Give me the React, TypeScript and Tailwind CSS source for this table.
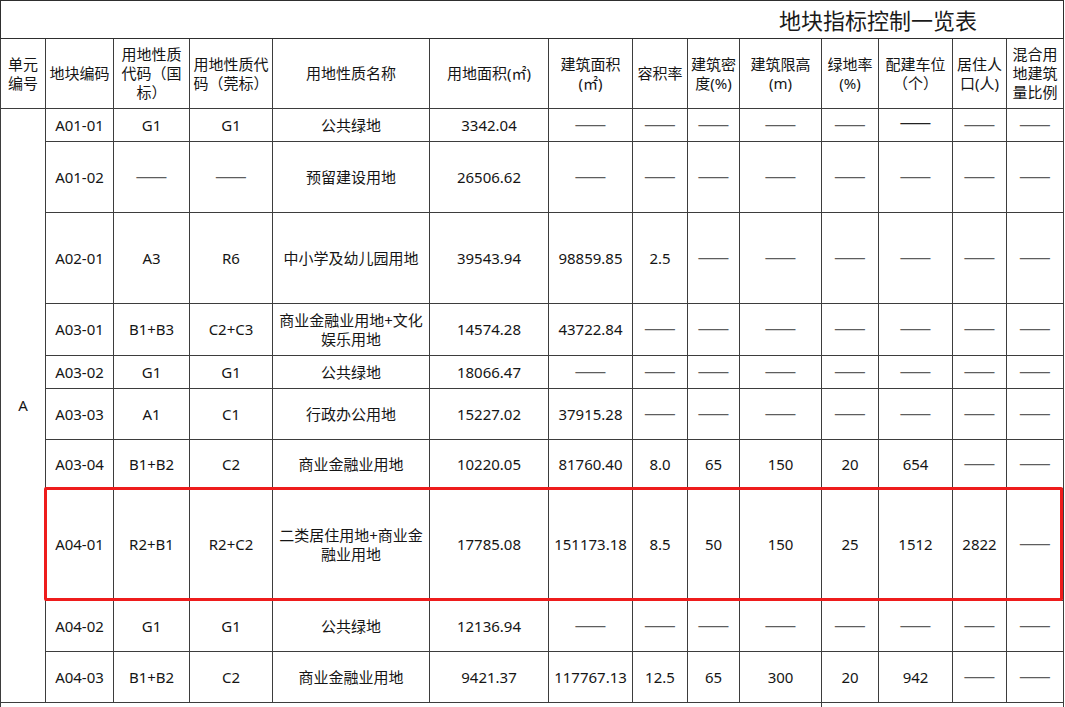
import React from "react";

const D = "——";

type Cell = string | string[];

const colWidths = [45, 68, 76, 83, 157, 119, 84, 55, 52, 82, 57, 74, 54, 57];

const headers: string[][] = [
  ["单元", "编号"],
  ["地块编码"],
  ["用地性质", "代码（国", "标）"],
  ["用地性质代", "码（莞标）"],
  ["用地性质名称"],
  ["用地面积(㎡)"],
  ["建筑面积", "(㎡)"],
  ["容积率"],
  ["建筑密", "度(%)"],
  ["建筑限高", "(m)"],
  ["绿地率", "(%)"],
  ["配建车位", "（个）"],
  ["居住人", "口(人)"],
  ["混合用", "地建筑", "量比例"],
];

const rows: { h: string; cells: Cell[] }[] = [
  { h: "h-[33px]", cells: ["A01-01", "G1", "G1", "公共绿地", "3342.04", D, D, D, D, D, "RAISED", D, D] },
  { h: "h-[71px]", cells: ["A01-02", D, D, "预留建设用地", "26506.62", D, D, D, D, D, D, D, D] },
  { h: "h-[91px]", cells: ["A02-01", "A3", "R6", "中小学及幼儿园用地", "39543.94", "98859.85", "2.5", D, D, D, D, D, D] },
  { h: "h-[52px]", cells: ["A03-01", "B1+B3", "C2+C3", ["商业金融业用地+文化", "娱乐用地"], "14574.28", "43722.84", D, D, D, D, D, D, D] },
  { h: "h-[33px]", cells: ["A03-02", "G1", "G1", "公共绿地", "18066.47", D, D, D, D, D, D, D, D] },
  { h: "h-[51px]", cells: ["A03-03", "A1", "C1", "行政办公用地", "15227.02", "37915.28", D, D, D, D, D, D, D] },
  { h: "h-[49px]", cells: ["A03-04", "B1+B2", "C2", "商业金融业用地", "10220.05", "81760.40", "8.0", "65", "150", "20", "654", D, D] },
  { h: "h-[112px]", cells: ["A04-01", "R2+B1", "R2+C2", ["二类居住用地+商业金", "融业用地"], "17785.08", "151173.18", "8.5", "50", "150", "25", "1512", "2822", D] },
  { h: "h-[51px]", cells: ["A04-02", "G1", "G1", "公共绿地", "12136.94", D, D, D, D, D, D, D, D] },
  { h: "h-[51px]", cells: ["A04-03", "B1+B2", "C2", "商业金融业用地", "9421.37", "117767.13", "12.5", "65", "300", "20", "942", D, D] },
];

const tdBase = "border border-[#3d3d3d] p-0 text-center align-middle";
const dashFont = { fontFamily: '"Noto Sans CJK SC", sans-serif' };

function renderCell(c: Cell) {
  if (Array.isArray(c)) {
    return (
      <div className="leading-[19px]">
        {c.map((l, i) => (
          <div key={i}>{l}</div>
        ))}
      </div>
    );
  }
  if (c === "RAISED") {
    return (
      <span className="relative top-[-2px] text-[19px] leading-[15px] text-[#222]" style={dashFont}>
        {D}
      </span>
    );
  }
  if (c === D) {
    return (
      <span className="text-[19px] leading-[15px] text-[#5e5e5e]" style={dashFont}>
        {D}
      </span>
    );
  }
  return <span>{c}</span>;
}

export default function App() {
  return (
    <div
      className="relative w-[1065px] h-[707px] overflow-hidden bg-white text-[15px] text-[#151515]"
      style={{ fontFamily: '"Noto Sans", "Noto Sans CJK SC", sans-serif' }}
    >
      <table className="table-fixed border-collapse w-[1063px]">
        <colgroup>
          {colWidths.map((w, i) => (
            <col key={i} style={{ width: w }} />
          ))}
        </colgroup>
        <tbody>
          <tr className="h-[38px]">
            <td colSpan={14} className="border border-[#2e2e2e] p-0 text-left align-middle">
              <span className="pl-[778px] text-[22px] leading-[30px] text-[#1a1a1a]">
                地块指标控制一览表
              </span>
            </td>
          </tr>
          <tr className="h-[70px]">
            {headers.map((h, i) => (
              <td key={i} className={tdBase}>
                <div className="leading-[19px]">
                  {h.map((l, j) => (
                    <div key={j} className="whitespace-nowrap">
                      {l}
                    </div>
                  ))}
                </div>
              </td>
            ))}
          </tr>
          {rows.map((r, ri) => (
            <tr key={ri} className={r.h}>
              {ri === 0 && (
                <td rowSpan={10} className={tdBase}>
                  A
                </td>
              )}
              {r.cells.map((c, ci) => (
                <td key={ci} className={tdBase + " whitespace-nowrap"}>
                  {renderCell(c)}
                </td>
              ))}
            </tr>
          ))}
          <tr className="h-[30px]">
            <td colSpan={10} className={tdBase}></td>
            <td colSpan={4} className={tdBase}></td>
          </tr>
        </tbody>
      </table>
      <div className="absolute left-[44px] top-[487px] w-[1019px] h-[114px] border-[3px] border-[#ee1c1c] rounded-[2px] pointer-events-none" />
    </div>
  );
}
